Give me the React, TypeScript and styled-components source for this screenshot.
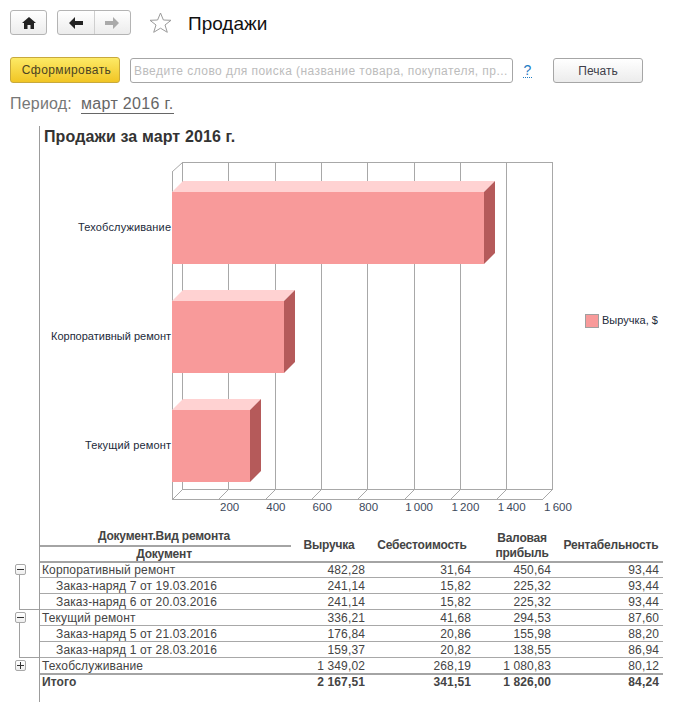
import React from "react";
import styled, { createGlobalStyle } from "styled-components";

const Global = createGlobalStyle`
  html, body { margin: 0; padding: 0; background: #fff; }
  body { font-family: "Liberation Sans", Arial, sans-serif; color: #333; }
`;

const Page = styled.div`
  width: 682px;
  height: 702px;
  overflow: hidden;
  background: #fff;
`;

const Header = styled.header`
  display: flex;
  align-items: center;
  height: 25px;
  padding: 10px 0 0 10px;
`;

const ToolButton = styled.div<{ $w: number }>`
  box-sizing: border-box;
  width: ${(p) => p.$w}px;
  height: 25px;
  display: flex;
  align-items: center;
  justify-content: center;
  border: 1px solid #b4b4b4;
  border-radius: 3px;
  background: linear-gradient(#ffffff, #ececec);
`;

const NavGroup = styled(ToolButton)`
  margin-left: 10px;
`;

const NavPart = styled.div<{ $line?: boolean }>`
  flex: 1;
  height: 100%;
  display: flex;
  align-items: center;
  justify-content: center;
  border-left: ${(p) => (p.$line ? "1px solid #cfcfcf" : "none")};
`;

const StarIcon = styled.svg`
  margin-left: 18px;
  display: block;
`;

const Title = styled.h1`
  margin: 2px 0 0 16px;
  font-size: 19px;
  font-weight: 400;
  color: #111;
  line-height: 25px;
`;

const Toolbar = styled.div`
  display: flex;
  align-items: flex-end;
  height: 26px;
  margin-top: 22px;
  padding-left: 10px;
`;

const PrimaryButton = styled.div`
  box-sizing: border-box;
  width: 110px;
  height: 26px;
  padding-left: 3px;
  display: flex;
  align-items: center;
  justify-content: center;
  border: 1px solid #c8a93c;
  border-radius: 3px;
  background: linear-gradient(#fdea66, #f1c524);
  font-size: 12px;
  letter-spacing: 0.4px;
  color: #4b4423;
`;

const SearchBox = styled.div`
  box-sizing: border-box;
  width: 383px;
  height: 25px;
  margin-left: 10px;
  padding: 0 3px;
  display: flex;
  align-items: center;
  border: 1px solid #a6a6a6;
  border-radius: 3px;
  font-size: 12px;
  letter-spacing: 0.44px;
  color: #bcbcbc;
  white-space: nowrap;
  overflow: hidden;
`;

const Help = styled.div`
  width: 9px;
  margin: 0 0 5px 10px;
  font-size: 14px;
  line-height: 14px;
  color: #1f7cc4;
  border-bottom: 1px dotted #1f7cc4;
  text-align: center;
`;

const PrintButton = styled.div`
  box-sizing: border-box;
  width: 90px;
  height: 25px;
  margin-left: 21px;
  display: flex;
  align-items: center;
  justify-content: center;
  border: 1px solid #a6a6a6;
  border-radius: 3px;
  background: linear-gradient(#ffffff, #ececec);
  font-size: 12px;
  color: #3f3f4a;
`;

const PeriodRow = styled.div`
  display: flex;
  height: 20px;
  margin-top: 11px;
  padding-left: 10px;
  font-size: 16px;
  line-height: 20px;
  letter-spacing: 0.2px;
  color: #777;
`;

const PeriodLink = styled.span`
  margin-left: 9px;
  color: #666;
  letter-spacing: 0.33px;
  border-bottom: 1px solid #666;
  height: 19px;
`;

const Body = styled.div`
  display: grid;
  grid-template-columns: 39px 1fr;
  margin-top: 12px;
  height: 576px;
`;

const Gutter = styled.div`
  padding-top: 436px;
`;

const TreeGroup = styled.div<{ $h: number }>`
  box-sizing: border-box;
  display: flex;
  flex-direction: column;
  height: ${(p) => p.$h}px;
  padding-top: 2px;
`;

const TreeBox = styled.div`
  box-sizing: border-box;
  width: 11px;
  height: 11px;
  margin-left: 15px;
  flex: none;
  display: flex;
  align-items: center;
  justify-content: center;
  border: 1px solid #a8a8a8;
  border-radius: 2px;
  background: linear-gradient(#fff, #eee);
`;

const TreeLine = styled.div`
  flex: 1;
  margin-left: 19px;
  border-left: 1px solid #a0a0a0;
  border-bottom: 1px solid #a0a0a0;
`;

const Report = styled.section`
  border-left: 1px solid #9c9c9c;
`;

const ReportTitle = styled.h2`
  margin: 0;
  padding: 2px 0 0 4px;
  height: 14px;
  font-size: 16px;
  line-height: 18px;
  font-weight: 700;
  letter-spacing: 0.12px;
  color: #333;
`;

const ChartSvg = styled.svg`
  display: block;
`;

const Table = styled.div`
  width: 623px;
  font-size: 12px;
  letter-spacing: 0.13px;
`;

const columns = "251px 78px 106px 80px 108px";

const HeadRow = styled.div`
  display: grid;
  grid-template-columns: ${columns};
  height: 33px;
  margin-bottom: -1px;
  border-bottom: 2px solid #a4a4a4;
  font-weight: 700;
  color: #444;
  letter-spacing: -0.2px;
`;

const GroupHead = styled.div`
  display: flex;
  flex-direction: column;
  justify-content: flex-end;
  text-align: center;
`;

const GroupHeadTop = styled.div`
  height: 17px;
  padding-right: 3px;
  line-height: 17px;
  border-bottom: 2px solid #a4a4a4;
`;

const GroupHeadBottom = styled.div`
  height: 14px;
  padding-right: 3px;
  line-height: 14px;
`;

const HeadCell = styled.div<{ $left?: number; $right?: number }>`
  display: flex;
  align-items: center;
  justify-content: center;
  text-align: center;
  line-height: 15px;
  padding-left: ${(p) => p.$left ?? 0}px;
  padding-right: ${(p) => p.$right ?? 0}px;
  padding-top: 2px;
`;

const Row = styled.div<{ $thick?: boolean; $last?: boolean }>`
  display: grid;
  grid-template-columns: ${columns};
  box-sizing: border-box;
  height: ${(p) => (p.$thick ? 17 : 16)}px;
  line-height: ${(p) => (p.$last ? 15 : 17)}px;
  border-bottom: ${(p) =>
    p.$last ? "none" : p.$thick ? "2px solid #a4a4a4" : "1px solid #a8a8a8"};
  color: #444;
  font-weight: ${(p) => (p.$last ? 700 : 400)};
`;

const NameCell = styled.div<{ $indent?: boolean }>`
  padding-left: ${(p) => (p.$indent ? 16 : 2)}px;
  white-space: nowrap;
`;

const NumCell = styled.div`
  text-align: right;
  padding-right: 4px;
  white-space: nowrap;
`;

const bars = [
  { label: "Техобслуживание", top: 192, right: 484, w: 93 },
  { label: "Корпоративный ремонт", top: 301, right: 284, w: 120 },
  { label: "Текущий ремонт", top: 410, right: 250, w: 86 },
];
const ticks = ["200", "400", "600", "800", "1 000", "1 200", "1 400", "1 600"];

function Chart() {
  const step = 46.3;
  const d = 11;
  const x0 = 172;
  const yTop = 172;
  const grid = "#a8a8a8";
  const font = "Liberation Sans, Arial, sans-serif";
  return (
    <ChartSvg width={642} height={386} viewBox="40 142 642 386">
      <polyline points={`${x0},${yTop} ${x0 + d - 0.5},${yTop - d + 1.5}`} fill="none" stroke={grid} />
      <line x1={x0 + d - 0.5} y1={162.5} x2={553} y2={162.5} stroke={grid} />
      {Array.from({ length: 9 }).map((_, i) => {
        const bx = Math.round(182 + i * step) + 0.5;
        const fx = Math.round(x0 + i * step) + 0.5;
        return (
          <g key={i}>
            <line x1={bx} y1={162} x2={bx} y2={489.5} stroke={grid} />
            <line x1={bx} y1={489.5} x2={fx} y2={499.5} stroke={grid} />
          </g>
        );
      })}
      <line x1={182} y1={489.5} x2={553} y2={489.5} stroke={grid} />
      <line x1={172.5} y1={172} x2={172.5} y2={499.5} stroke={grid} />
      <line x1={172} y1={499.5} x2={543} y2={499.5} stroke={grid} />
      {bars.map((b) => (
        <g key={b.label}>
          <polygon
            points={`${x0},${b.top} ${x0 + d},${b.top - d} ${b.right + d},${b.top - d} ${b.right},${b.top}`}
            fill="#ffd2d2"
          />
          <polygon
            points={`${b.right},${b.top} ${b.right + d},${b.top - d} ${b.right + d},${b.top + 61} ${b.right},${b.top + 72}`}
            fill="#b55a5a"
          />
          <rect x={x0} y={b.top} width={b.right - x0} height={72} fill="#f89a9a" />
          <text
            x={171}
            y={b.top + 39}
            textAnchor="end"
            fontSize={11}
            textLength={b.w}
            lengthAdjust="spacing"
            fill="#222a3a"
            fontFamily={font}
          >
            {b.label}
          </text>
        </g>
      ))}
      {ticks.map((t, i) => (
        <text
          key={t}
          x={220 + i * step}
          y={511}
          fontSize={11.5}
          wordSpacing={-1}
          fill="#3d4a5c"
          fontFamily={font}
        >
          {t}
        </text>
      ))}
      <rect x={585.5} y={314.5} width={13} height={13} fill="#f89a9a" stroke="#a0a0a0" />
      <text x={602} y={324} fontSize={11} fill="#222a3a" fontFamily={font}>
        Выручка, $
      </text>
    </ChartSvg>
  );
}

const rows = [
  { name: "Корпоративный ремонт", v: ["482,28", "31,64", "450,64", "93,44"] },
  { name: "Заказ-наряд 7 от 19.03.2016", indent: true, v: ["241,14", "15,82", "225,32", "93,44"] },
  { name: "Заказ-наряд 6 от 20.03.2016", indent: true, v: ["241,14", "15,82", "225,32", "93,44"] },
  { name: "Текущий ремонт", v: ["336,21", "41,68", "294,53", "87,60"] },
  { name: "Заказ-наряд 5 от 21.03.2016", indent: true, v: ["176,84", "20,86", "155,98", "88,20"] },
  { name: "Заказ-наряд 1 от 28.03.2016", indent: true, v: ["159,37", "20,82", "138,55", "86,94"] },
  { name: "Техобслуживание", thick: true, v: ["1 349,02", "268,19", "1 080,83", "80,12"] },
  { name: "Итого", last: true, v: ["2 167,51", "341,51", "1 826,00", "84,24"] },
];

const Sign = ({ plus }: { plus?: boolean }) => (
  <svg width="7" height="7" viewBox="0 0 7 7">
    <path d={plus ? "M0 3.5H7M3.5 0V7" : "M0 3.5H7"} stroke="#333" strokeWidth="1" fill="none" />
  </svg>
);

export default function App() {
  return (
    <Page>
      <Global />
      <Header>
        <ToolButton $w={37}>
          <svg width="14" height="12" viewBox="0 0 14 12">
            <path d="M7 0L0 6h2v6h3.5V8h3v4H12V6h2L7 0z" fill="#222" />
          </svg>
        </ToolButton>
        <NavGroup $w={74}>
          <NavPart>
            <svg width="14" height="12" viewBox="0 0 14 12">
              <path d="M0 6L6 0v4h8v4H6v4z" fill="#222" />
            </svg>
          </NavPart>
          <NavPart $line>
            <svg width="14" height="12" viewBox="0 0 14 12">
              <path d="M14 6L8 0v4H0v4h8v4z" fill="#aaa" />
            </svg>
          </NavPart>
        </NavGroup>
        <StarIcon width="23" height="21" viewBox="0 0 23 21">
          <polygon
            points="11.5,1 14.4,8 22,8.3 16,13 18.3,20.3 11.5,16.2 4.7,20.3 7,13 1,8.3 8.6,8"
            fill="#fff"
            stroke="#9a9a9a"
          />
        </StarIcon>
        <Title>Продажи</Title>
      </Header>
      <Toolbar>
        <PrimaryButton>Сформировать</PrimaryButton>
        <SearchBox>Введите слово для поиска (название товара, покупателя, пр...</SearchBox>
        <Help>?</Help>
        <PrintButton>Печать</PrintButton>
      </Toolbar>
      <PeriodRow>
        Период:
        <PeriodLink>март 2016 г.</PeriodLink>
      </PeriodRow>
      <Body>
        <Gutter>
          <TreeGroup $h={48}>
            <TreeBox><Sign /></TreeBox>
            <TreeLine />
          </TreeGroup>
          <TreeGroup $h={48}>
            <TreeBox><Sign /></TreeBox>
            <TreeLine />
          </TreeGroup>
          <TreeGroup $h={16}>
            <TreeBox><Sign plus /></TreeBox>
          </TreeGroup>
        </Gutter>
        <Report>
          <ReportTitle>Продажи за март 2016 г.</ReportTitle>
          <Chart />
          <Table>
            <HeadRow>
              <GroupHead>
                <GroupHeadTop>Документ.Вид ремонта</GroupHeadTop>
                <GroupHeadBottom>Документ</GroupHeadBottom>
              </GroupHead>
              <HeadCell $right={2}>Выручка</HeadCell>
              <HeadCell>Себестоимость</HeadCell>
              <HeadCell $left={14}>Валовая прибыль</HeadCell>
              <HeadCell $left={4}>Рентабельность</HeadCell>
            </HeadRow>
            {rows.map((r) => (
              <Row key={r.name} $thick={r.thick} $last={r.last}>
                <NameCell $indent={r.indent}>{r.name}</NameCell>
                {r.v.map((n, i) => (
                  <NumCell key={i}>{n}</NumCell>
                ))}
              </Row>
            ))}
          </Table>
        </Report>
      </Body>
    </Page>
  );
}
